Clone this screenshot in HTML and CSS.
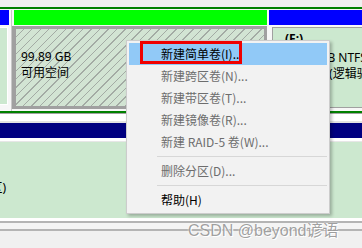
FILE: index.html
```html
<!DOCTYPE html>
<html lang="zh-CN">
<head>
    <meta charset="UTF-8">
    <title>磁盘管理</title>
    <link rel="stylesheet" href="styles.css">
</head>
<body>
    <div class="screen">
        <div class="disk disk-ext">
            <div class="ext-line"></div>
            <div class="parts">
                <div class="part part-edge">
                    <div class="bar bar-logical"></div>
                    <div class="cell cell-edge"></div>
                </div>
                <div class="part part-free">
                    <div class="bar bar-free"></div>
                    <div class="cell cell-hatched">
                        <div class="cell-text cell-text-free">
                            <div>99.89 GB</div>
                            <div>可用空间</div>
                        </div>
                    </div>
                </div>
                <div class="part part-right">
                    <div class="bar bar-logical"></div>
                    <div class="cell cell-plain">
                        <div class="cell-text">
                            <div class="vol-label">(F:)</div>
                            <div>100.00 GB NTFS</div>
                            <div>状态良好 (逻辑驱动器)</div>
                        </div>
                    </div>
                </div>
            </div>
            <div class="ext-line"></div>
            <div class="disk-gap"></div>
            <div class="disk-divider"></div>
        </div>

        <div class="disk disk-primary">
            <div class="bar bar-primary"></div>
            <div class="cell cell-wide">
                <div class="cell-text cell-text-edge">(主分区)</div>
            </div>
            <div class="disk-end"></div>
        </div>

        <div class="context-menu">
            <div class="menu-item active">新建简单卷(I)...</div>
            <div class="menu-item disabled">新建跨区卷(N)...</div>
            <div class="menu-item disabled">新建带区卷(T)...</div>
            <div class="menu-item disabled">新建镜像卷(R)...</div>
            <div class="menu-item disabled">新建 RAID-5 卷(W)...</div>
            <div class="menu-sep"></div>
            <div class="menu-item disabled">删除分区(D)...</div>
            <div class="menu-sep"></div>
            <div class="menu-item">帮助(H)</div>
        </div>

        <div class="mark-box"></div>
        <div class="watermark">CSDN @beyond谚语</div>
    </div>
</body>
</html>
```

FILE: styles.css
```css
:root {
    --body-green: #cce8cf;
    --frame: #a0a0a0;
    --menu-bg: #f2f2f2;
    --menu-hover: #91c9f7;
    --disabled: #6d6d6d;
}

* {
    margin: 0;
    padding: 0;
    box-sizing: border-box;
}

body {
    background: #f0f0f0;
    font-family: "Noto Sans", "Noto Sans CJK SC", sans-serif;
    font-size: 12px;
    color: #000;
}

.screen {
    position: relative;
    width: 362px;
    height: 248px;
    overflow: hidden;
}

/* disk rows */

.disk-ext {
    padding-top: 7px;
}

.ext-line {
    height: 2px;
    background: #008000;
}

.parts {
    display: flex;
    height: 102px;
    padding-top: 1px;
    background: #f7f7f7;
}

.part {
    display: flex;
    flex-direction: column;
    flex-shrink: 0;
}

.bar {
    height: 15px;
    flex-shrink: 0;
}

.bar-logical {
    background: #0000ff;
}

.bar-free {
    background: #00ff00;
    margin-left: 2px;
}

.bar-primary {
    background: #000080;
}

.part-edge {
    width: 9px;
}

.cell-edge {
    width: 8px;
    height: 78px;
    margin-top: 2px;
    background: var(--body-green);
    border: 1px solid #fff;
    border-left: none;
}

.part-free {
    width: 256px;
    margin-left: 2px;
    border-left: 1px solid #c8c8c8;
}

.cell-hatched {
    height: 83px;
    margin-top: 1px;
    border: 3px solid var(--frame);
    border-left-width: 4px;
    background: repeating-linear-gradient(
        135deg,
        #d2e4d3 0,
        #d2e4d3 5px,
        #a3aba4 5px,
        #a3aba4 6px
    );
}

.part-right {
    flex: 1 1 0;
    min-width: 0;
    overflow: hidden;
    margin-left: 2px;
}

.cell-plain {
    height: 81px;
    margin: 2px 0 0 3px;
    border: 1px solid var(--frame);
    border-right: none;
    background: var(--body-green);
}

.cell-text {
    padding: 3px 0 0 5px;
    line-height: 16px;
    white-space: nowrap;
}

.cell-text-free {
    padding: 20px 0 0 5px;
}

.vol-label {
    font-weight: bold;
    padding-left: 7px;
    margin-bottom: 3px;
}

.disk-gap {
    height: 2px;
}

.disk-divider {
    height: 10px;
    margin-top: -2px;
    border-top: 1px solid var(--frame);
    border-bottom: 2px solid #e3e3e3;
    background: #fff;
}

.disk-primary {
    background: #fff;
}

.cell-wide {
    height: 77px;
    margin-top: 3px;
    background: var(--body-green);
    border-top: 1px solid #e6e6e6;
    overflow: hidden;
}

.cell-text-edge {
    padding: 38px 0 0 0;
    margin-left: -37px;
}

.disk-end {
    height: 10px;
    margin-top: 3px;
    border-top: 2px solid #b4b4b4;
    border-bottom: 2px solid #b4b4b4;
    background: #f4f4f4;
}

/* context menu */

.context-menu {
    position: absolute;
    left: 126px;
    top: 40px;
    width: 204px;
    padding: 2px;
    background: var(--menu-bg);
    border: 1px solid #cccccc;
    box-shadow: 2px 2px 3px rgba(0, 0, 0, 0.25);
    font-family: "Noto Sans CJK SC", sans-serif;
}

.menu-item {
    height: 22px;
    line-height: 22px;
    padding-left: 32px;
    white-space: nowrap;
}

.menu-item.active {
    background: var(--menu-hover);
}

.menu-item.disabled {
    color: var(--disabled);
}

.menu-sep {
    height: 7px;
    margin-left: 28px;
    position: relative;
}

.menu-sep::after {
    content: "";
    position: absolute;
    left: 0;
    right: 0;
    top: 3px;
    height: 1px;
    background: #d7d7d7;
}

/* annotation overlays */

.mark-box {
    position: absolute;
    left: 140px;
    top: 41px;
    width: 102px;
    height: 23px;
    border: 3px solid #f00000;
}

.watermark {
    position: absolute;
    left: 188px;
    top: 217px;
    font-family: "Liberation Sans", "Noto Sans CJK SC", sans-serif;
    font-size: 16px;
    color: rgba(130, 130, 130, 0.75);
    text-shadow: 0 0 2px #fff, 1px 1px 0 #fff;
}
```
